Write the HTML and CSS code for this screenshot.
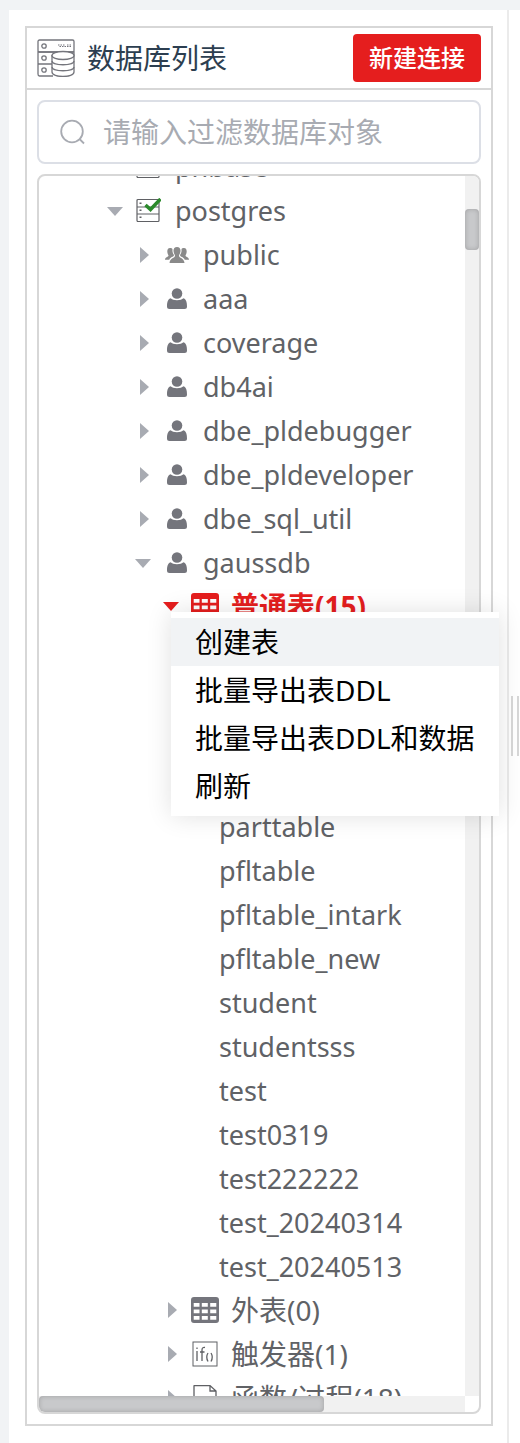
FILE: index.html
```html
<!DOCTYPE html>
<html lang="zh-CN">
<head>
<meta charset="utf-8">
<title>数据库列表</title>
<link rel="stylesheet" href="styles.css">
</head>
<body>
<svg class="sprite" aria-hidden="true">
  <symbol id="user" viewBox="0 0 24 24">
    <circle cx="12" cy="6.500" r="5.300" fill="currentColor"/>
    <path fill="currentColor" d="M5.500 11.300C7 12.500 9 13.300 12 13.300S17 12.500 18.500 11.300C21.500 12.500 22 16 22 19.500Q22 22 19.500 22H4.500Q2 22 2 19.500C2 16 2.500 12.500 5.500 11.300Z"/>
  </symbol>
  <symbol id="group" viewBox="0 0 24 16">
    <path fill="currentColor" d="M12 0C14.500 0 15.600 1.500 15.500 4C15.400 6 14.500 7 14 8.500C14 11.500 19 10.500 19.500 16H4.500C5 10.500 10 11.500 10 8.500C9.500 7 8.600 6 8.500 4C8.400 1.500 9.500 0 12 0Z"/>
    <path fill="currentColor" d="M5 1C6.200 .8 7 1.200 7.500 2C7.200 5 8 6.500 9 8C9 10 5 10 4.300 12.800H0C0 10 3.500 10 3.500 8.500C3.200 7.500 2.300 6.500 2.300 4.500C2.300 2.500 3 1.200 5 1ZM19 1C17.800 .8 17 1.200 16.500 2C16.800 5 16 6.500 15 8C15 10 19 10 19.700 12.800H24C24 10 20.500 10 20.500 8.500C20.800 7.500 21.700 6.500 21.700 4.500C21.700 2.500 21 1.200 19 1Z"/>
  </symbol>
  <symbol id="table" viewBox="0 0 28 26">
    <path fill="currentColor" fill-rule="evenodd" d="M3 0H25Q28 0 28 3V23Q28 26 25 26H3Q0 26 0 23V3Q0 0 3 0ZM2.700 6V9.700H8.500V6ZM10.800 6V9.700H16.800V6ZM19.200 6V9.700H25.300V6ZM2.700 12.500V16.200H8.500V12.500ZM10.800 12.500V16.200H16.800V12.500ZM19.200 12.500V16.200H25.300V12.500ZM2.700 19V22.700H8.500V19ZM10.800 19V22.700H16.800V19ZM19.200 19V22.700H25.300V19Z"/>
  </symbol>
  <symbol id="server" viewBox="0 0 26 26">
    <g fill="none" stroke="#5f6064" stroke-width="1.200"><rect x="2" y="1.500" width="22" height="22" rx="1"/><path d="M2 9H24M2 16H24"/></g>
    <path fill="#5f6064" d="M4.500 4.500H6.500V6H4.500ZM4.500 11.500H6.500V13H4.500ZM4.500 18.500H6.500V20H4.500Z"/>
  </symbol>
</svg>
<main class="page">
  <section class="panel">
    <header class="head">
      <svg class="logo" viewBox="0 0 38 38" fill="none" stroke="#74757c" stroke-width="1.300" aria-hidden="true">
        <rect x="1" y="1" width="36" height="12" rx="1.500"/>
        <path d="M15 25H2.500Q1 25 1 23.500V13H37V16M1 24V35Q1 37 2.500 37H16"/>
        <circle cx="7" cy="7" r="2.200"/><circle cx="7" cy="19" r="2.200"/><circle cx="7" cy="31" r="2.200"/>
        <path stroke-width="1" stroke-dasharray="1.500 1" d="M21 6H28M30 6H34M22.500 7.500H34"/>
        <path fill="#fff" d="M15 16V33C15 39 37 39 37 33V16"/>
        <ellipse cx="26" cy="16.500" rx="11" ry="4" fill="#fff"/>
        <path d="M15 22C15 27 37 27 37 22M15 28C15 33 37 33 37 28"/>
      </svg>
      <h1 class="title">数据库列表</h1>
      <button class="connect" type="button">新建连接</button>
    </header>
    <div class="body">
      <label class="search">
        <svg class="search-icon" viewBox="0 0 26 26" fill="none" stroke="#a8abb2" stroke-width="1.800" aria-hidden="true"><circle cx="13" cy="12.500" r="10.800"/><path d="M20.500 20L25 24.500"/></svg>
        <input class="search-input" type="text" placeholder="请输入过滤数据库对象" aria-label="请输入过滤数据库对象">
      </label>
      <div class="tree">
        <div class="view">
          <ul class="list">
            <li class="row db"><i class="arrow"></i><svg class="ico"><use href="#server"/></svg>phbase</li>
            <li class="row db"><i class="arrow open"></i><svg class="ico" viewBox="0 0 26 26"><use href="#server" width="26" height="26"/><path d="M10.500 7L15.500 11.500L25.500 1" fill="none" stroke="#2b8a2b" stroke-width="3.500"/></svg>postgres</li>
            <li class="row schema"><i class="arrow"></i><svg class="ico group"><use href="#group"/></svg>public</li>
            <li class="row schema"><i class="arrow"></i><svg class="ico"><use href="#user"/></svg>aaa</li>
            <li class="row schema"><i class="arrow"></i><svg class="ico"><use href="#user"/></svg>coverage</li>
            <li class="row schema"><i class="arrow"></i><svg class="ico"><use href="#user"/></svg>db4ai</li>
            <li class="row schema"><i class="arrow"></i><svg class="ico"><use href="#user"/></svg>dbe_pldebugger</li>
            <li class="row schema"><i class="arrow"></i><svg class="ico"><use href="#user"/></svg>dbe_pldeveloper</li>
            <li class="row schema"><i class="arrow"></i><svg class="ico"><use href="#user"/></svg>dbe_sql_util</li>
            <li class="row schema"><i class="arrow open"></i><svg class="ico"><use href="#user"/></svg>gaussdb</li>
            <li class="row kind current"><i class="arrow open"></i><svg class="ico"><use href="#table"/></svg>普通表(15)</li>
            <li class="tables">
              <ul class="names">
                <li class="row">parttable</li>
                <li class="row">pfltable</li>
                <li class="row">pfltable_intark</li>
                <li class="row">pfltable_new</li>
                <li class="row">student</li>
                <li class="row">studentsss</li>
                <li class="row">test</li>
                <li class="row">test0319</li>
                <li class="row">test222222</li>
                <li class="row">test_20240314</li>
                <li class="row">test_20240513</li>
              </ul>
            </li>
            <li class="row kind"><i class="arrow"></i><svg class="ico"><use href="#table"/></svg>外表(0)</li>
            <li class="row kind"><i class="arrow"></i><svg class="ico" viewBox="0 0 28 26" fill="none" stroke="#5f6064"><rect x="2" y="1" width="24" height="24"/><path stroke-width="1.300" d="M6 10V20M6 6.500V8M9 11H13.500M11 20V9Q11 6 14 6.500M17 12Q14.500 16 17 20.500M20 12Q22.500 16 20 20.500"/></svg>触发器(1)</li>
            <li class="row kind"><i class="arrow"></i><svg class="ico" viewBox="0 0 28 26" fill="none" stroke="#5f6064" stroke-width="1.300"><path d="M3 26V1Q3 0.600 4 .6H19L25 6V26M19 .6V6H25"/></svg>函数/过程(18)</li>
          </ul>
        </div>
        <div class="vbar"><div class="vthumb"></div></div>
        <div class="hbar"><div class="hthumb"></div></div>
      </div>
    </div>
    <menu class="menu">
      <li><button class="item active" type="button">创建表</button></li>
      <li><button class="item" type="button">批量导出表DDL</button></li>
      <li><button class="item" type="button">批量导出表DDL和数据</button></li>
      <li><button class="item" type="button">刷新</button></li>
    </menu>
  </section>
  <div class="splitter"><span class="grip"></span></div>
</main>
</body>
</html>
```
FILE: styles.css
```css
* { box-sizing: border-box; }
body {
  margin: 0;
  background: #f1f3f5;
  color: #606266;
  font-family: "Noto Sans", "Noto Sans CJK SC", sans-serif;
  font-size: 28px;
  font-variant-ligatures: none;
}
ul, menu { list-style: none; margin: 0; padding: 0; }
button, input { font: inherit; }
.sprite { position: absolute; width: 0; height: 0; }
.page {
  display: flex;
  height: 100vh;
  padding: 10px 0 0 9px;
}
.panel {
  position: relative;
  flex: 1;
  min-width: 0;
  display: flex;
  flex-direction: column;
  background: #fff;
  padding: 16px 14px 17px 16px;
}
.head {
  display: flex;
  align-items: center;
  height: 64px;
  flex: none;
  border: 2px solid #d7d7d7;
  padding: 0 10px;
}
.logo { width: 38px; height: 38px; }
.title {
  flex: 1;
  margin: 0 0 0 12px;
  color: #2c3e50;
  font-size: 28px;
  line-height: 40px;
  font-weight: 400;
}
.connect {
  height: 48px;
  padding: 0 16px;
  border: 0;
  border-radius: 4px;
  background: #e51e1e;
  color: #fff;
  font-size: 24px;
  font-weight: 500;
  line-height: 48px;
}
.body {
  flex: 1;
  min-height: 0;
  display: flex;
  flex-direction: column;
  gap: 10px;
  padding: 10px;
  border: 2px solid #d7d7d7;
  border-top: 0;
}
.search {
  display: flex;
  align-items: center;
  gap: 18px;
  height: 64px;
  flex: none;
  padding: 0 20px;
  border: 2px solid #dcdfe6;
  border-radius: 8px;
}
.search-icon { width: 26px; height: 26px; flex: none; }
.search-input {
  flex: 1;
  min-width: 0;
  padding: 0;
  border: 0;
  outline: 0;
  background: none;
  color: #606266;
}
.search-input::placeholder { color: #a8abb2; }
.tree {
  flex: 1;
  min-height: 0;
  display: grid;
  grid-template: minmax(0, 1fr) 16px / minmax(0, 1fr) 14px;
  border: 2px solid #d7d7d7;
  border-radius: 8px;
  overflow: hidden;
}
.view { overflow: hidden; }
.list { margin-top: -32px; }
.row {
  display: flex;
  align-items: center;
  height: 44px;
  padding-top: 2px;
  font-size: 27px;
  line-height: 42px;
  white-space: nowrap;
}
.ico { width: 24px; height: 24px; flex: none; margin-right: 14px; color: #74757c; }
.ico.group { height: 16px; color: #8a8a8a; }
.db { padding-left: 68px; }
.db .ico { width: 26px; height: 26px; }
.schema { padding-left: 96px; }
.schema .arrow { margin-right: 14px; }
.kind { padding-top: 0; padding-left: 124px; font-size: 28px; }
.kind .ico { width: 28px; height: 26px; margin-right: 12px; }
.arrow { width: 16px; height: 16px; flex: none; margin-right: 12px; }
.arrow::before {
  content: "";
  display: block;
  width: 9px;
  height: 16px;
  margin-left: 5px;
  background: #a8abb2;
  clip-path: polygon(0 0, 100% 50%, 0 100%);
}
.arrow.open::before {
  width: 16px;
  height: 9px;
  margin: 4px 0 0;
  clip-path: polygon(0 0, 100% 0, 50% 100%);
}
.current { color: #e51e1e; font-weight: 700; }
.current .ico { color: #e51e1e; }
.current .arrow::before { background: #e51e1e; }
.names { padding: 176px 0 0 180px; }
.vbar { background: #f1f1f1; padding-top: 33px; }
.vthumb {
  height: 41px;
  border-radius: 4px;
  background: #c8c9cb;
  box-shadow: inset 0 0 5px rgba(0, 0, 0, .2);
}
.hbar { background: #f1f1f1; }
.hthumb {
  width: 67%;
  height: 16px;
  border-radius: 4px;
  background: #c8c9cb;
  box-shadow: inset 0 0 5px rgba(0, 0, 0, .2);
}
.menu {
  position: absolute;
  left: 162px;
  top: 602px;
  z-index: 2;
  padding: 6px 0;
  background: #fff;
  box-shadow: 0 0 24px rgba(0, 0, 0, .12);
}
.item {
  display: block;
  width: 100%;
  height: 48px;
  padding: 0 24px;
  border: 0;
  background: #fff;
  color: #000;
  text-align: left;
  line-height: 48px;
  white-space: nowrap;
}
.item.active { background: #f1f3f5; }
.splitter {
  display: flex;
  align-items: center;
  width: 13px;
  padding: 0 0 2px 2px;
  background: #fff;
  border-left: 2px solid #ebebeb;
}
.grip {
  width: 8px;
  height: 60px;
  border: 2px solid #d7d7d7;
  border-width: 0 2px;
}
```
